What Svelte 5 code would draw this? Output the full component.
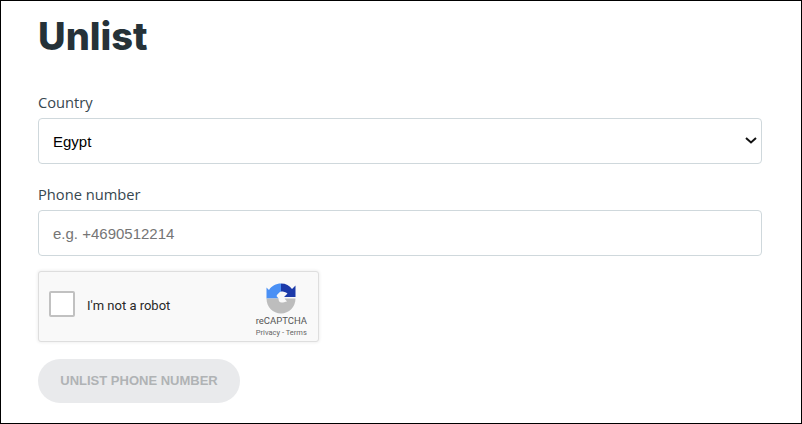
<script>
	let country = $state('Egypt');
	let phone = $state('');
	let checked = $state(false);
</script>

<main class="page">
	<h1>Unlist</h1>

	<form class="form" onsubmit={(e) => e.preventDefault()}>
		<div class="field">
			<label for="country">Country</label>
			<div class="select-wrap">
				<select id="country" bind:value={country}>
					<option>Egypt</option>
					<option>Sweden</option>
					<option>Norway</option>
				</select>
				<svg class="chevron" width="12" height="7" viewBox="0 0 12 7" aria-hidden="true">
					<path d="M1 1L6 5.5L11 1" fill="none" stroke="#111" stroke-width="2" />
				</svg>
			</div>
		</div>

		<div class="field">
			<label for="phone">Phone number</label>
			<input id="phone" type="text" placeholder="e.g. +4690512214" bind:value={phone} />
		</div>

		<div class="captcha">
			<button
				type="button"
				class="tick"
				aria-label="I'm not a robot"
				onclick={() => (checked = !checked)}
			></button>
			<span class="robot">I'm not a robot</span>
			<div class="brand">
				<svg width="30" height="31" viewBox="0 0 30 31" aria-hidden="true">
					<path d="M15 0.5C10 0.5 5.5 3 3 7L0.5 4.5V15.5H12.5L10.5 13C11.5 11 13 9.5 15 8.5Z" fill="#4a90f5" />
					<path d="M15 0.5C20 0.5 23.5 2.5 26 6L29.5 2.5V14H18L21.5 10.5C19.5 9 17.5 8.5 15 8.5Z" fill="#1c3aa9" />
					<path d="M0.5 15.5H12.5C12.5 18 13.5 19.5 15.5 19.5C17.5 19.5 19 19 21 18.5L18.5 15.5H29.5C29.5 24 23 30.5 15 30.5C7 30.5 0.5 24 0.5 15.5Z" fill="#bdbdbd" />
				</svg>
				<span class="name">reCAPTCHA</span>
				<span class="links">Privacy - Terms</span>
			</div>
		</div>

		<button class="submit" type="submit" disabled>UNLIST PHONE NUMBER</button>
	</form>
</main>

<style>
	:global(body) {
		margin: 0;
		background: #fff;
	}
	.page {
		box-sizing: border-box;
		width: 802px;
		height: 424px;
		border: 1px solid #000;
		padding: 0 39px 0 37px;
		overflow: hidden;
		font-family: "Open Sans", sans-serif;
		color: #37474f;
	}
	h1 {
		margin: 12px 0 0;
		font-family: Inter, sans-serif;
		font-size: 38px;
		line-height: 46px;
		font-weight: 800;
		color: #263238;
	}
	.form {
		display: flex;
		flex-direction: column;
		margin-top: 33px;
	}
	.field {
		display: flex;
		flex-direction: column;
		margin-bottom: 20px;
	}
	label {
		font-size: 14.7px;
		line-height: 20px;
		margin-bottom: 6px;
	}
	.select-wrap {
		position: relative;
	}
	.chevron {
		position: absolute;
		top: 19px;
		right: 5px;
		pointer-events: none;
	}
	select,
	input {
		box-sizing: border-box;
		display: block;
		width: 100%;
		height: 46px;
		border: 1px solid #cfd8dc;
		border-radius: 4px;
		background: #fff;
		font-family: "Liberation Sans", sans-serif;
		font-size: 15px;
		outline: none;
		color: #000;
	}
	select {
		appearance: none;
		padding: 0 14px;
	}
	input {
		padding: 0 14px;
	}
	input::placeholder {
		color: #757575;
		opacity: 1;
	}
	.captcha {
		box-sizing: border-box;
		display: flex;
		align-items: center;
		width: 281px;
		height: 71px;
		margin-top: -5px;
		padding: 0 12px 0 10px;
		background: #f9f9f9;
		border: 1px solid #dedede;
		border-radius: 3px;
		box-shadow: 0 0 3px 1px rgba(0, 0, 0, 0.06);
	}
	.tick {
		box-sizing: border-box;
		flex: none;
		width: 26px;
		height: 26px;
		margin-bottom: 6px;
		padding: 0;
		background: #fff;
		border: 2px solid #c1c1c1;
		border-radius: 2px;
	}
	.robot {
		margin-left: 12px;
		margin-bottom: 2px;
		font-family: Roboto, sans-serif;
		font-size: 13px;
		color: #282828;
	}
	.brand {
		display: flex;
		flex-direction: column;
		align-items: center;
		margin-left: auto;
		margin-right: -1px;
		padding-top: 7px;
		font-family: Roboto, sans-serif;
		color: #555;
	}
	.name {
		margin-top: 1px;
		font-size: 9.5px;
		line-height: 12px;
	}
	.links {
		margin-top: 1px;
		font-size: 7.5px;
		line-height: 10px;
		color: #666;
	}
	.submit {
		width: 202px;
		height: 44px;
		margin-top: 17px;
		padding: 0 0 2px;
		border: 0;
		border-radius: 22px;
		background: #e9eaec;
		color: #b0b3b5;
		font-family: "Liberation Sans", sans-serif;
		font-size: 13px;
		font-weight: 700;
	}
</style>
